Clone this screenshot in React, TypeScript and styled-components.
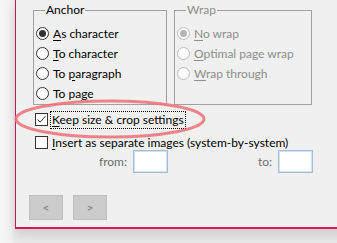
import React from "react";
import styled, { createGlobalStyle } from "styled-components";

const GlobalStyle = createGlobalStyle`
  html, body {
    margin: 0;
    padding: 0;
    background: #f4f4f4;
  }
  body {
    font: 12px Lato, "Noto Sans", sans-serif;
    color: #000;
  }
`;

const Page = styled.div`
  position: relative;
  width: 337px;
  height: 243px;
  overflow: hidden;
  padding-left: 15px;
  box-sizing: border-box;
  background: linear-gradient(to right, #f6f6f6 0, #f1f1f1 11px, #e9e9e9 15px);
`;

const Window = styled.div`
  width: 340px;
  height: 229px;
  box-sizing: border-box;
  background: #f0f0f0;
  border-left: 1px solid #c2185b;
  border-bottom: 2px solid #e3125e;
  box-shadow: 0 6px 10px rgba(0, 0, 0, 0.12);
  padding: 2px 0 0 17px;
`;

const GroupRow = styled.div`
  display: flex;
  gap: 7px;
  align-items: stretch;
`;

const Group = styled.fieldset<{ $width: number }>`
  width: ${(p) => p.$width}px;
  box-sizing: border-box;
  margin: 0;
  padding: 5px 0 1px 2px;
  border: 1px solid #a0a0a0;
  min-inline-size: 0;
`;

const Legend = styled.legend<{ $disabled?: boolean }>`
  margin-left: 9px;
  padding: 0 1px;
  height: 16px;
  line-height: 16px;
  color: ${(p) => (p.$disabled ? "#8d8d8d" : "#000")};
`;

const OptionRow = styled.div<{ $disabled?: boolean; $height?: number }>`
  display: flex;
  align-items: center;
  height: ${(p) => p.$height ?? 20}px;
  gap: 4px;
  color: ${(p) => (p.$disabled ? "#8d8d8d" : "#000")};
  white-space: nowrap;
`;

const Radio = styled.span<{ $checked?: boolean; $disabled?: boolean }>`
  width: 13px;
  height: 13px;
  box-sizing: border-box;
  border-radius: 50%;
  border: 1px solid ${(p) => (p.$disabled ? "#bcbcbc" : "#333")};
  background: ${(p) => (p.$disabled ? "#fcfcfc" : "#fff")};
  display: flex;
  align-items: center;
  justify-content: center;
  flex: none;

  &::after {
    content: "";
    display: ${(p) => (p.$checked ? "block" : "none")};
    width: 7px;
    height: 7px;
    border-radius: 50%;
    background: ${(p) => (p.$disabled ? "#b5b5b5" : "#333")};
  }
`;

const Check = styled.span`
  width: 13px;
  height: 13px;
  box-sizing: border-box;
  border: 1px solid #333;
  background: #fff;
  flex: none;
  display: flex;
  align-items: center;
  justify-content: center;
`;

const Key = styled.span`
  text-decoration: underline;
  text-underline-offset: 2px;
`;

const Focused = styled.span`
  outline: 1px dotted #000;
  outline-offset: 0;
  padding: 0 1px 1px 1px;
  margin-left: -1px;
`;

const Checks = styled.div`
  padding: 3px 0 0 2px;
`;

const RangeRow = styled.div`
  display: flex;
  align-items: center;
  height: 23px;
  margin-top: -4px;
  color: #6d6d6d;
`;

const RangeLabel = styled.span<{ $width: number }>`
  width: ${(p) => p.$width}px;
  text-align: right;
  padding-right: 6px;
  box-sizing: border-box;
`;

const NumBox = styled.span`
  width: 35px;
  height: 23px;
  box-sizing: border-box;
  background: #fff;
  border: 1px solid #a4bcd8;
  box-shadow: inset 0 0 0 1px #d3e2f3;
`;

const Buttons = styled.div`
  display: flex;
  gap: 10px;
  margin: 22px 0 0 -4px;
`;

const NavButton = styled.span`
  width: 34px;
  height: 25px;
  box-sizing: border-box;
  background: #cccccc;
  border: 1px solid #bfbfbf;
  color: #7d7d7d;
  display: flex;
  align-items: center;
  justify-content: center;
  font-size: 12px;
  line-height: 1;
`;

const Ring = styled.svg`
  position: absolute;
  left: 0;
  top: 0;
  pointer-events: none;
`;

const CheckMark = () => (
  <svg width="11" height="11" viewBox="0 0 11 11">
    <path d="M1.5 5.5 L4.2 8.2 L9.5 2" fill="none" stroke="#333" strokeWidth="1" />
  </svg>
);

export default function App() {
  return (
    <>
      <GlobalStyle />
      <Page>
        <Window>
          <GroupRow>
            <Group $width={134}>
              <Legend>Anchor</Legend>
              <OptionRow>
                <Radio $checked />
                <span>
                  <Key>A</Key>s character
                </span>
              </OptionRow>
              <OptionRow>
                <Radio />
                <span>
                  <Key>T</Key>o character
                </span>
              </OptionRow>
              <OptionRow>
                <Radio />
                <span>
                  To <Key>p</Key>aragraph
                </span>
              </OptionRow>
              <OptionRow>
                <Radio />
                <span>
                  To pa<Key>g</Key>e
                </span>
              </OptionRow>
            </Group>
            <Group $width={138}>
              <Legend $disabled>Wrap</Legend>
              <OptionRow $disabled>
                <Radio $checked $disabled />
                <span>
                  <Key>N</Key>o wrap
                </span>
              </OptionRow>
              <OptionRow $disabled>
                <Radio $disabled />
                <span>
                  <Key>O</Key>ptimal page wrap
                </span>
              </OptionRow>
              <OptionRow $disabled>
                <Radio $disabled />
                <span>
                  <Key>W</Key>rap through
                </span>
              </OptionRow>
            </Group>
          </GroupRow>
          <Checks>
            <OptionRow $height={23}>
              <Check>
                <CheckMark />
              </Check>
              <Focused>
                <Key>K</Key>eep size &amp; crop settings
              </Focused>
            </OptionRow>
            <OptionRow $height={23}>
              <Check />
              <span>
                <Key>I</Key>nsert as separate images (system-by-system)
              </span>
            </OptionRow>
          </Checks>
          <RangeRow>
            <RangeLabel $width={100}>from:</RangeLabel>
            <NumBox />
            <RangeLabel $width={110}>to:</RangeLabel>
            <NumBox />
          </RangeRow>
          <Buttons>
            <NavButton>&lt;</NavButton>
            <NavButton>&gt;</NavButton>
          </Buttons>
        </Window>
        <Ring width="337" height="243" viewBox="0 0 337 243">
          <ellipse
            cx="110"
            cy="119"
            rx="94"
            ry="18"
            fill="none"
            stroke="#ee6e74"
            strokeOpacity="0.85"
            strokeWidth="3"
          />
        </Ring>
      </Page>
    </>
  );
}
